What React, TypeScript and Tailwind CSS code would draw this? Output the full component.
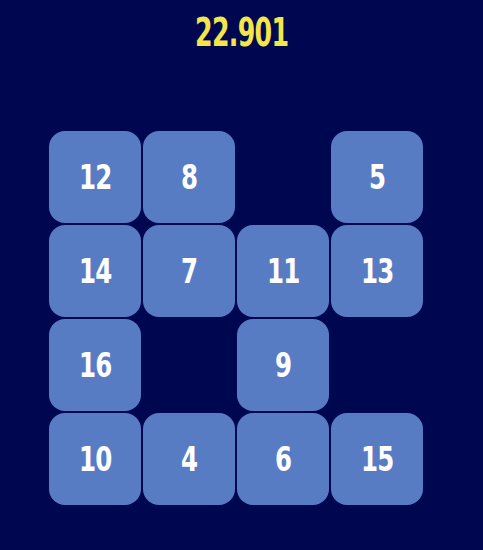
const tiles: (number | null)[] = [12, 8, null, 5, 14, 7, 11, 13, 16, null, 9, null, 10, 4, 6, 15]

export default function App() {
  return (
    <div className="h-[550px] w-[483px] bg-[#000751]" style={{ fontFamily: '"DejaVu Sans Condensed", "DejaVu Sans", sans-serif' }}>
      <div className="pt-[13px] text-center text-[39px] font-bold leading-[39px] tracking-[-1px] text-[#f3e64a]">
        <span className="inline-block scale-x-[0.72]">22.901</span>
      </div>
      <div className="ml-[49px] mt-[79px] grid w-[374px] grid-cols-4 gap-[2px]">
        {tiles.map((t, i) =>
          t === null ? (
            <div key={i} className="h-[92px] w-[92px]" />
          ) : (
            <div
              key={i}
              className="flex h-[92px] w-[92px] items-center justify-center rounded-[16px] bg-[#587cc4] text-[34px] font-bold tracking-[-1px] text-white"
            >
              <span className="inline-block scale-x-[0.8]">{t}</span>
            </div>
          )
        )}
      </div>
    </div>
  )
}
